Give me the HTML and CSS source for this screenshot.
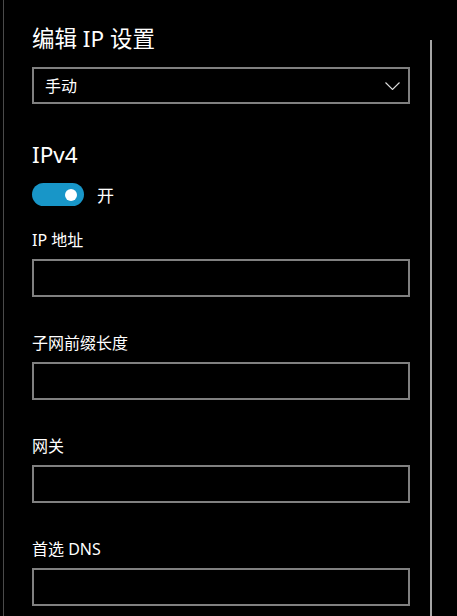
FILE: index.html
```html
<!DOCTYPE html>
<html lang="zh-CN">
<head>
    <meta charset="UTF-8">
    <title>编辑 IP 设置</title>

    <link rel="stylesheet" href="styles.css">
</head>

<body>
    <div class="page">
        <div class="panel">
            <h1 class="title">编辑 IP 设置</h1>

            <div class="select">
                <span>手动</span>
                <svg class="chevron" width="15" height="8" viewBox="0 0 15 8">
                    <path d="M0.5 0.5 L7.5 7.5 L14.5 0.5" fill="none" stroke="#ddd" stroke-width="1.1"/>
                </svg>
            </div>

            <h2 class="subtitle">IPv4</h2>
            <div class="switch-row">
                <div class="switch"><div class="knob"></div></div>
                <span>开</span>
            </div>

            <div class="field">
                <label>IP 地址</label>
                <div class="input"></div>
            </div>
            <div class="field">
                <label>子网前缀长度</label>
                <div class="input"></div>
            </div>
            <div class="field">
                <label>网关</label>
                <div class="input"></div>
            </div>
            <div class="field">
                <label>首选 DNS</label>
                <div class="input"></div>
            </div>
        </div>
        <div class="scrollbar"></div>
    </div>
</body>
</html>
```

FILE: styles.css
```css
html, body {
    margin: 0;
    height: 100%;
    background: #000;
    overflow: hidden;
}

body {
    color: #fff;
    font: normal 16px "Noto Sans", "Noto Sans CJK SC", sans-serif;
}

.page {
    display: flex;
    height: 100%;
    margin-left: 3px;
    border-left: 1px solid #4a4a4a;
}

.panel {
    width: 378px;
    padding: 24px 0 0 28px;
}

.title {
    margin: 0;
    font-size: 22.5px;
    font-weight: normal;
    line-height: 30px;
}

.select {
    display: flex;
    align-items: center;
    justify-content: space-between;
    height: 33px;
    margin-top: 13px;
    padding: 0 8px 0 11px;
    border: 2px solid #808080;
    line-height: 22px;
}

.chevron {
    display: block;
    margin-top: 1px;
}

.subtitle {
    margin: 36px 0 0;
    font-size: 22.5px;
    font-weight: normal;
    line-height: 30px;
}

.switch-row {
    display: flex;
    align-items: center;
    gap: 13px;
    margin-top: 12px;
    font-size: 17px;
}

.switch {
    display: flex;
    align-items: center;
    justify-content: flex-end;
    width: 52px;
    height: 23px;
    padding-right: 7px;
    box-sizing: border-box;
    border-radius: 12px;
    background: #1896c8;
}

.knob {
    width: 12px;
    height: 12px;
    border-radius: 50%;
    background: #fff;
}

.field {
    margin-top: 22px;
}

.field + .field {
    margin-top: 35px;
}

.field label {
    display: block;
    line-height: 22px;
}

.input {
    height: 34px;
    margin-top: 8px;
    border: 2px solid #808080;
}

.scrollbar {
    width: 2px;
    margin: 40px 0 0 20px;
    background: #a6a6a6;
}
```
